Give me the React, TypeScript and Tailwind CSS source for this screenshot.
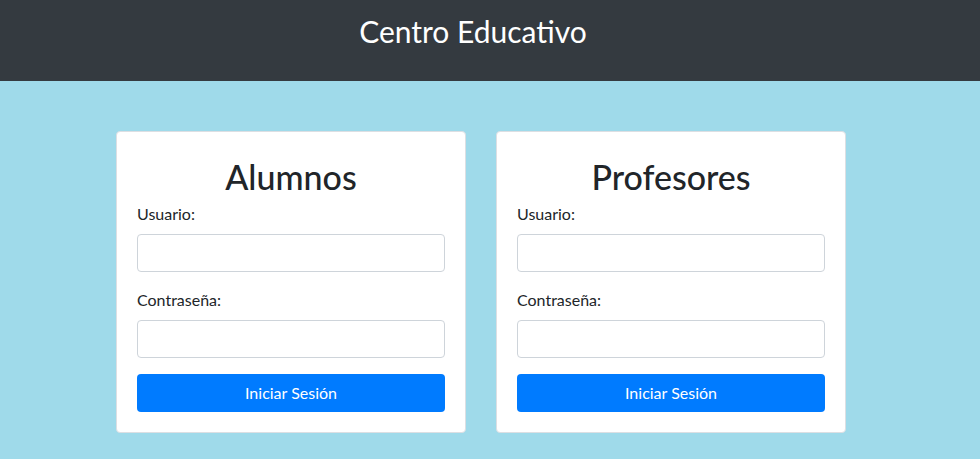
import type { FormEvent } from 'react'

const font = { fontFamily: 'Lato, "Open Sans", Arial, sans-serif' }

function LoginCard({ title }: { title: string }) {
  function handleSubmit(e: FormEvent) {
    e.preventDefault()
  }

  return (
    <div className="w-[350px] rounded-[4px] border border-[#dcdfe3] bg-white p-5">
      <h1 className="mb-[2px] pt-[2px] text-center text-[34px] font-medium leading-[46px] text-[#212529]">{title}</h1>
      <form onSubmit={handleSubmit}>
        <div className="mb-4">
          <label className="mb-2 block text-base leading-6 text-[#212529]">Usuario:</label>
          <input
            type="text"
            className="block h-[38px] w-full rounded-[4px] border border-[#ced4da] bg-white px-3 text-base"
          />
        </div>
        <div className="mb-4">
          <label className="mb-2 block text-base leading-6 text-[#212529]">Contraseña:</label>
          <input
            type="password"
            className="block h-[38px] w-full rounded-[4px] border border-[#ced4da] bg-white px-3 text-base"
          />
        </div>
        <button
          type="submit"
          className="block h-[38px] w-full rounded-[4px] bg-[#007bff] text-base text-white"
        >
          Iniciar Sesión
        </button>
      </form>
    </div>
  )
}

export default function App() {
  return (
    <div className="min-h-[459px] bg-[#9fdaea]" style={font}>
      <header className="flex h-[81px] bg-[#343a40]">
        <div className="w-[946px] pt-[11px] text-center text-[30px] leading-[40px] text-white">Centro Educativo</div>
      </header>
      <main className="flex gap-[30px] pb-[26px] pl-[116px] pt-[50px]">
        <LoginCard title="Alumnos" />
        <LoginCard title="Profesores" />
      </main>
    </div>
  )
}
